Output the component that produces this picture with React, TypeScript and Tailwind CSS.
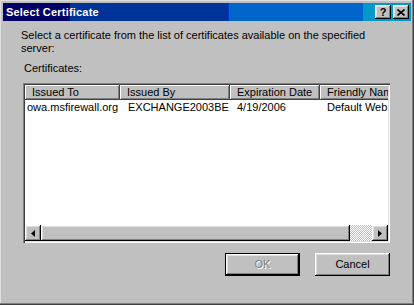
const raised =
  "shadow-[inset_-1px_-1px_#000,inset_1px_1px_#fff,inset_-2px_-2px_#808080,inset_2px_2px_#dfdfdf]";
const header =
  "shadow-[inset_-1px_-1px_#404040,inset_1px_1px_#fff,inset_-2px_-2px_#808080]";

const columns = [
  { title: "Issued To", value: "owa.msfirewall.org", w: "w-[95px]", pad: "pl-[2px]" },
  { title: "Issued By", value: "EXCHANGE2003BE", w: "w-[110px]", pad: "pl-[8px]" },
  { title: "Expiration Date", value: "4/19/2006", w: "w-[90px]", pad: "pl-[7px]" },
  { title: "Friendly Name", value: "Default Web Site", w: "w-[70px]", pad: "pl-[7px]" },
];

const TitleButton = ({ children }: { children: React.ReactNode }) => (
  <div className={`w-[16px] h-[14px] bg-[#c0c0c0] flex items-center justify-center ${raised}`}>
    {children}
  </div>
);

const Arrow = ({ dir }: { dir: "left" | "right" }) => (
  <div className={`w-[16px] h-[16px] shrink-0 bg-[#c0c0c0] flex items-center justify-center ${raised}`}>
    <svg width="4" height="7" viewBox="0 0 4 7">
      {dir === "left" ? <path d="M4 0 L0 3.5 L4 7 Z" fill="#000" /> : <path d="M0 0 L4 3.5 L0 7 Z" fill="#000" />}
    </svg>
  </div>
);

export default function App() {
  return (
    <div
      className="w-[414px] h-[305px] bg-[#c0c0c0] p-[3px] flex flex-col text-[11px] text-black shadow-[inset_-1px_-1px_#404040,inset_-2px_-2px_#808080,inset_1px_1px_#dfdfdf]"
      style={{ fontFamily: '"Liberation Sans", Arial, sans-serif' }}
    >
      {/* title bar */}
      <div className="h-[18px] flex items-center justify-between pl-[3px] pr-[2px] bg-[linear-gradient(to_right,#000066_0px,#000066_67px,#003399_67px,#003399_225px,#0033cc_225px,#0033cc_226px,#0066cc_226px,#0066cc_360px,#0099cc_360px)]">
        <span className="text-white font-bold text-[11px] leading-[18px] tracking-[0.2px]">Select Certificate</span>
        <div className="flex gap-[2px]">
          <TitleButton>
            <span className="font-bold text-[11px] leading-none">?</span>
          </TitleButton>
          <TitleButton>
            <svg width="8" height="7" viewBox="0 0 8 7">
              <path d="M0.5 0.5 L7.5 6.5 M7.5 0.5 L0.5 6.5" stroke="#000" strokeWidth="1.6" />
            </svg>
          </TitleButton>
        </div>
      </div>

      {/* body */}
      <div className="flex flex-col pl-[20px] pr-[21px]">
        <p className="mt-[8px] ml-[-2px] leading-[13px] w-[366px]">
          Select a certificate from the list of certificates available on the specified server:
        </p>
        <p className="mt-[7px] ml-[1px] leading-[13px]">Certificates:</p>

        {/* list view */}
        <div className="mt-[8px] h-[160px] p-[2px] bg-white flex flex-col shadow-[inset_1px_1px_#808080,inset_2px_2px_#404040,inset_-1px_-1px_#fff,inset_-2px_-2px_#dfdfdf]">
          <div className="flex-1 overflow-hidden flex flex-col">
            <div className="flex h-[15px] shrink-0">
              {columns.map((c) => (
                <div
                  key={c.title}
                  className={`${c.w} shrink-0 bg-[#c0c0c0] pl-[7px] leading-[15px] whitespace-nowrap overflow-hidden ${header}`}
                >
                  {c.title}
                </div>
              ))}
              <div className={`flex-1 bg-[#c0c0c0] ${header}`} />
            </div>
            <div className="flex h-[13px] leading-[13px] mt-[1px]">
              {columns.map((c) => (
                <div key={c.title} className={`${c.w} shrink-0 ${c.pad} whitespace-nowrap overflow-hidden`}>
                  {c.value}
                </div>
              ))}
            </div>
          </div>
          {/* horizontal scrollbar */}
          <div className="flex h-[16px] shrink-0">
            <Arrow dir="left" />
            <div className={`w-[309px] shrink-0 bg-[#c0c0c0] ${raised}`} />
            <div className="flex-1 bg-[repeating-conic-gradient(#fff_0_25%,#c0c0c0_0_50%)] bg-[length:2px_2px]" />
            <Arrow dir="right" />
          </div>
        </div>

        {/* buttons */}
        <div className="mt-[10px] flex justify-end gap-[15px]">
          <div className="w-[75px] h-[23px] border border-black">
            <div className={`w-full h-full bg-[#c0c0c0] flex items-center justify-center ${raised}`}>
              <span className="text-[#808080] [text-shadow:1px_1px_0_#fff]">OK</span>
            </div>
          </div>
          <div className={`w-[75px] h-[23px] bg-[#c0c0c0] flex items-center justify-center ${raised}`}>
            Cancel
          </div>
        </div>
      </div>
    </div>
  );
}
